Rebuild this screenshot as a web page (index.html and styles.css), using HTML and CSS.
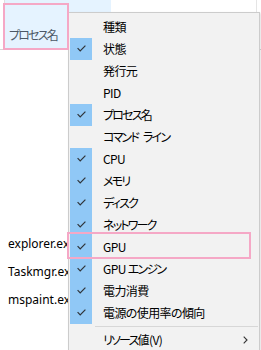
FILE: index.html
```html
<!DOCTYPE html>
<html lang="ja">
<head>
<meta charset="utf-8">
<link rel="stylesheet" href="styles.css">
</head>
<body>
<div class="page">
  <div class="header">
    <div class="hcell hcell-hover"><span class="hlabel">プロセス名</span></div>
    <div class="hcell hcell-rest"></div>
  </div>
  <div class="rows">
    <div class="prow">explorer.exe</div>
    <div class="prow">Taskmgr.exe</div>
    <div class="prow">mspaint.exe</div>
  </div>

  <div class="menu">
    <div class="item"><span class="check"></span><span class="label">種類</span></div>
    <div class="item"><span class="check on"><svg width="9" height="7" viewBox="0 0 9 7"><polyline points="0.6,3.2 3.2,5.8 8.4,0.6" /></svg></span><span class="label">状態</span></div>
    <div class="item"><span class="check"></span><span class="label">発行元</span></div>
    <div class="item"><span class="check"></span><span class="label">PID</span></div>
    <div class="item"><span class="check on"><svg width="9" height="7" viewBox="0 0 9 7"><polyline points="0.6,3.2 3.2,5.8 8.4,0.6" /></svg></span><span class="label kana">プロセス名</span></div>
    <div class="item"><span class="check"></span><span class="label kana">コマンド ライン</span></div>
    <div class="item"><span class="check on"><svg width="9" height="7" viewBox="0 0 9 7"><polyline points="0.6,3.2 3.2,5.8 8.4,0.6" /></svg></span><span class="label">CPU</span></div>
    <div class="item"><span class="check on"><svg width="9" height="7" viewBox="0 0 9 7"><polyline points="0.6,3.2 3.2,5.8 8.4,0.6" /></svg></span><span class="label kana">メモリ</span></div>
    <div class="item"><span class="check on"><svg width="9" height="7" viewBox="0 0 9 7"><polyline points="0.6,3.2 3.2,5.8 8.4,0.6" /></svg></span><span class="label kana">ディスク</span></div>
    <div class="item"><span class="check on"><svg width="9" height="7" viewBox="0 0 9 7"><polyline points="0.6,3.2 3.2,5.8 8.4,0.6" /></svg></span><span class="label kana">ネットワーク</span></div>
    <div class="item"><span class="check on"><svg width="9" height="7" viewBox="0 0 9 7"><polyline points="0.6,3.2 3.2,5.8 8.4,0.6" /></svg></span><span class="label">GPU</span></div>
    <div class="item"><span class="check on"><svg width="9" height="7" viewBox="0 0 9 7"><polyline points="0.6,3.2 3.2,5.8 8.4,0.6" /></svg></span><span class="label">GPU <span class="kana">エンジン</span></span></div>
    <div class="item"><span class="check on"><svg width="9" height="7" viewBox="0 0 9 7"><polyline points="0.6,3.2 3.2,5.8 8.4,0.6" /></svg></span><span class="label">電力消費</span></div>
    <div class="item"><span class="check on"><svg width="9" height="7" viewBox="0 0 9 7"><polyline points="0.6,3.2 3.2,5.8 8.4,0.6" /></svg></span><span class="label">電源の使用率の傾向</span></div>
    <div class="sep"></div>
    <div class="item"><span class="check"></span><span class="label"><span class="kana">リソース</span>値(V)</span><svg class="arrow" width="5" height="8" viewBox="0 0 5 8"><polyline points="0.7,0.7 4,4 0.7,7.3" /></svg></div>
  </div>

  <div class="mark mark-header"></div>
  <div class="mark mark-gpu"></div>
</div>
</body>
</html>
```

FILE: styles.css
```css
html, body {
  margin: 0;
  padding: 0;
  background: #ffffff;
}

body {
  width: 261px;
  height: 350px;
  overflow: hidden;
  font-family: "Noto Sans CJK JP", "Noto Sans", sans-serif;
  font-feature-settings: "palt";
}

.page {
  position: relative;
  width: 261px;
  height: 350px;
  overflow: hidden;
}

.header {
  display: flex;
  height: 49px;
  border-bottom: 1px solid #d5d5d5;
}

.hcell {
  display: flex;
  align-items: flex-end;
}

.hcell-hover {
  width: 106px;
  margin-left: 4px;
  background: #e5f3ff;
  border-left: 1px solid #e0e0e0;
}

.hcell-rest {
  flex: 1;
  border-right: 1px solid #e5e5e5;
  margin-right: 4px;
}

.hlabel {
  font-size: 12px;
  color: #4c5866;
  padding-left: 4px;
  padding-bottom: 7px;
  line-height: 14px;
  letter-spacing: -1.8px;
}

.rows {
  padding-top: 180px;
  display: flex;
  flex-direction: column;
}

.prow {
  height: 28px;
  line-height: 28px;
  padding-left: 8px;
  font-family: "Noto Sans", sans-serif;
  font-size: 12px;
  color: #000;
  white-space: nowrap;
}

.menu {
  position: absolute;
  left: 68px;
  top: 12px;
  width: 190px;
  height: 360px;
  background: #f2f2f2;
  border: 1px solid #cccccc;
  padding-top: 3px;
  box-sizing: content-box;
  box-shadow: 1px 1px 2px rgba(0, 0, 0, 0.12);
}

.item {
  display: flex;
  align-items: center;
  height: 22px;
}

.check {
  width: 22px;
  height: 22px;
  margin-left: 1px;
  display: flex;
  align-items: center;
  justify-content: center;
  flex: none;
}

.check.on {
  background: #90c8f6;
}

.check svg {
  margin-top: -1px;
}

.check svg polyline {
  fill: none;
  stroke: #2f3338;
  stroke-width: 1.2;
}

.label {
  margin-left: 11px;
  font-size: 12px;
  line-height: 14px;
  padding-bottom: 1px;
  color: #000;
  white-space: nowrap;
  flex: 1;
  letter-spacing: -0.6px;
}

.kana {
  letter-spacing: -1.8px;
  word-spacing: 4px;
}

.arrow {
  margin-right: 11px;
  margin-bottom: 1px;
}

.arrow polyline {
  fill: none;
  stroke: #333;
  stroke-width: 1.1;
}

.sep {
  height: 5px;
  display: flex;
  align-items: center;
  padding-left: 26px;
  padding-right: 1px;
}

.sep::before {
  content: "";
  display: block;
  height: 1px;
  flex: 1;
  background: #d7d7d7;
}

.mark {
  position: absolute;
  border: 2.5px solid #f5a8c6;
  box-sizing: border-box;
}

.mark-header {
  left: 3px;
  top: 3px;
  width: 66px;
  height: 47px;
}

.mark-gpu {
  left: 67px;
  top: 232px;
  width: 184px;
  height: 27px;
}
```
